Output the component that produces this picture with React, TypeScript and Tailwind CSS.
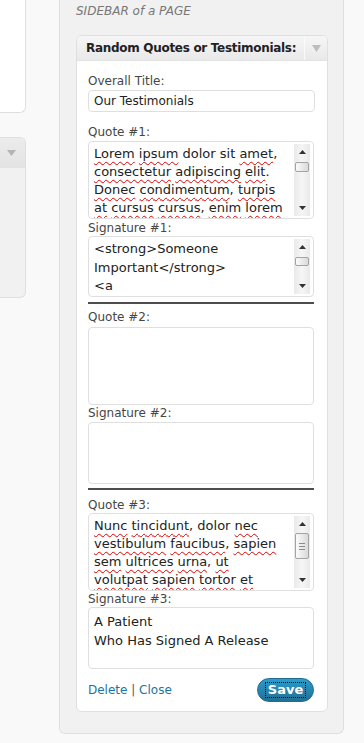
import type { ReactNode } from 'react'

function W({ children }: { children: ReactNode }) {
  return (
    <span className="underline decoration-[#e00000] decoration-wavy decoration-1 underline-offset-[3px]">
      {children}
    </span>
  )
}

function Tri({ up = false, className }: { up?: boolean; className: string }) {
  return (
    <svg width="7" height="4" viewBox="0 0 7 4" className={className}>
      <polygon points={up ? '0,4 7,4 3.5,0' : '0,0 7,0 3.5,4'} fill="currentColor" />
    </svg>
  )
}

function Scrollbar({ thumb, grip = false }: { thumb: string; grip?: boolean }) {
  return (
    <div className="my-[2px] mr-[3px] flex w-[16px] shrink-0 flex-col bg-linear-to-r from-[#e9e9e9] via-[#f6f6f6] to-[#e9e9e9]">
      <div className="flex h-[16px] items-center justify-center">
        <Tri up className="text-[#333]" />
      </div>
      <div className="flex-1 px-[1px]">
        <div
          className={`${thumb} flex flex-col items-center justify-center gap-[2px] rounded-[2px] border border-[#a3a3a3] bg-linear-to-r from-[#fbfbfb] to-[#dadada]`}
        >
          {grip && (
            <>
              <div className="h-px w-[6px] bg-[#8a8a8a]" />
              <div className="h-px w-[6px] bg-[#8a8a8a]" />
              <div className="h-px w-[6px] bg-[#8a8a8a]" />
            </>
          )}
        </div>
      </div>
      <div className="flex h-[16px] items-center justify-center">
        <Tri className="text-[#333]" />
      </div>
    </div>
  )
}

function Box({
  h,
  leading = 'leading-[18px]',
  scroll,
  children,
}: {
  h: string
  leading?: string
  scroll?: ReactNode
  children?: ReactNode
}) {
  return (
    <div className={`${h} flex w-[226px] overflow-hidden rounded-[4px] border border-[#dfdfdf] bg-white`}>
      <div className={`min-w-0 flex-1 overflow-hidden whitespace-nowrap pl-[5px] pt-[3px] text-[13px] text-[#222] ${leading}`}>
        {children}
      </div>
      {scroll}
    </div>
  )
}

function Label({ children, className }: { children: ReactNode; className: string }) {
  return <div className={`${className} text-[12px] leading-[15px] text-[#464646]`}>{children}</div>
}

export default function App() {
  return (
    <div className="flex h-[743px] w-[364px] overflow-hidden bg-[#f9f9f9] font-['DejaVu_Sans',sans-serif]">
      {/* left column */}
      <div className="w-[59px] shrink-0">
        <div className="h-[113px] w-[26px] rounded-br-[6px] border-r border-b border-[#dfdfdf] bg-white" />
        <div className="mt-[24px] h-[161px] w-[26px] overflow-hidden rounded-r-[6px] border border-l-0 border-[#dfdfdf] bg-[#f1f1f1]">
          <div className="flex h-[30px] items-center pl-[7px] bg-linear-to-b from-[#ececec] to-[#e3e3e3]">
            <svg width="9" height="6" viewBox="0 0 9 6">
              <polygon points="0,0 9,0 4.5,6" fill="#b4b4b4" />
            </svg>
          </div>
        </div>
      </div>

      {/* sidebar */}
      <div className="h-[734px] w-[285px] shrink-0 rounded-b-[6px] border border-t-0 border-[#dfdfdf] bg-[#f1f1f1] pl-[16px]">
        <div className="pt-[4px] text-[12px] italic leading-[15px] text-[#777]">SIDEBAR of a PAGE</div>

        <div className="mt-[16px] w-[252px] overflow-hidden rounded-[6px] border border-[#dfdfdf] bg-white">
          {/* header */}
          <div className="flex h-[25px] border-b border-[#e3e3e3] bg-linear-to-b from-[#f6f6f6] to-[#e9e9e9]">
            <div className="flex flex-1 items-center pl-[9px] text-[12px] font-bold tracking-[-0.3px] text-[#222]">
              Random Quotes or Testimonials:
            </div>
            <div className="flex w-[23px] items-center justify-center border-l border-[#fafafa]">
              <svg width="9" height="7" viewBox="0 0 9 7">
                <polygon points="0,0 9,0 4.5,7" fill="#bdbdbd" />
              </svg>
            </div>
          </div>

          {/* body */}
          <div className="pl-[11px] pt-[13px] pb-[9px]">
            <Label className="">Overall Title:</Label>
            <div className="mt-[1px] flex h-[22px] w-[227px] items-center rounded-[4px] border border-[#dfdfdf] pl-[5px] text-[12px] text-[#222]">
              Our Testimonials
            </div>

            <Label className="mt-[13px]">Quote #1:</Label>
            <div className="mt-[1px]">
              <Box h="h-[78px]" scroll={<Scrollbar thumb="mt-[2px] h-[10px]" />}>
                <div>
                  <W>Lorem</W> <W>ipsum</W> dolor sit <W>amet</W>,
                </div>
                <div>
                  <W>consectetur</W> <W>adipiscing</W> <W>elit</W>.
                </div>
                <div>
                  <W>Donec</W> <W>condimentum</W>, <W>turpis</W>
                </div>
                <div>
                  <W>at</W> <W>cursus</W> <W>cursus</W>, <W>enim</W> <W>lorem</W>
                </div>
              </Box>
            </div>

            <Label className="mt-[2px]">Signature #1:</Label>
            <Box h="h-[61px]" leading="leading-[18.5px]" scroll={<Scrollbar thumb="mt-[2px] h-[9px]" />}>
              <div>{'<strong>Someone'}</div>
              <div>{'Important</strong>'}</div>
              <div>{'<a'}</div>
            </Box>

            <div className="mt-[5px] h-[2px] w-[226px] bg-[#4d4d4d]" />

            <Label className="mt-[6px]">Quote #2:</Label>
            <div className="mt-[2px]">
              <Box h="h-[78px]" />
            </div>

            <Label className="mt-[1px]">Signature #2:</Label>
            <div className="mt-[1px]">
              <Box h="h-[62px]" />
            </div>

            <div className="mt-[4px] h-[2px] w-[226px] bg-[#4d4d4d]" />

            <Label className="mt-[8px]">Quote #3:</Label>
            <Box h="h-[78px]" scroll={<Scrollbar thumb="mt-px h-[26px]" grip />}>
              <div>
                <W>Nunc</W> <W>tincidunt</W>, dolor <W>nec</W>
              </div>
              <div>
                <W>vestibulum</W> <W>faucibus</W>, <W>sapien</W>
              </div>
              <div>
                <W>sem</W> <W>ultrices</W> <W>urna</W>, <W>ut</W>
              </div>
              <div>
                <W>volutpat</W> <W>sapien</W> <W>tortor</W> <W>et</W>
              </div>
            </Box>

            <Label className="mt-[1px]">Signature #3:</Label>
            <Box h="h-[62px]" leading="leading-[19px]">
              <div className="pt-px">A Patient</div>
              <div>Who Has Signed A Release</div>
            </Box>

            {/* actions */}
            <div className="mt-[9px] flex h-[24px] w-[226px] items-center justify-between">
              <div className="text-[12px] text-[#21759b]">
                Delete <span className="text-[#555]">|</span> Close
              </div>
              <button className="flex h-[24px] w-[57px] items-center justify-center rounded-full border border-[#1f6d91] bg-linear-to-b from-[#2e9ccb] to-[#1f6f95]">
                <span className="border border-dotted border-black px-[2px] py-px text-[13px] font-bold leading-[12px] text-white">
                  Save
                </span>
              </button>
            </div>
          </div>
        </div>
      </div>
    </div>
  )
}
